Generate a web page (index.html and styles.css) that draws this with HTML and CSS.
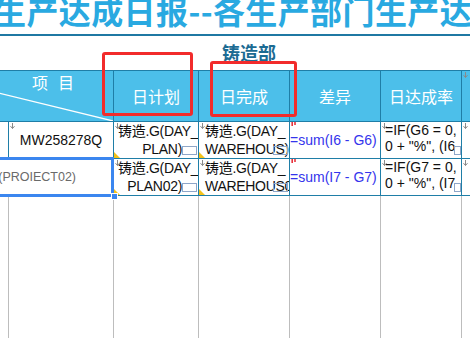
FILE: index.html
```html
<!DOCTYPE html>
<html lang="zh-CN">
<head>
    <meta charset="UTF-8">
    <title>生产达成日报</title>
    <link rel="stylesheet" href="styles.css">
</head>
<body>
    <div class="title-bar">
        <div class="title">生产达成日报--各生产部门生产达成日报</div>
    </div>
    <div class="dept">铸造部</div>

    <table class="sheet">
        <colgroup>
            <col class="col-a"><col class="col-b"><col class="col-c"><col class="col-d"><col class="col-e"><col class="col-f"><col class="col-g">
        </colgroup>
        <tr class="head">
            <th colspan="2" class="item-head">
                <svg class="diag" viewBox="0 0 165 51" preserveAspectRatio="none"><line x1="0" y1="10" x2="165" y2="51" stroke="#fff" stroke-width="1.3"/></svg>
                <span>项目</span>
            </th>
            <th>日计划</th>
            <th>日完成</th>
            <th>差异</th>
            <th>日达成率</th>
            <th class="blank"><svg class="tick" width="5" height="6" viewBox="0 0 5 6"><path d="M2.5 0V5.5M0.5 3.2L2.5 5.5L4.5 3.2" stroke="#8a8a8a" fill="none"/></svg></th>
        </tr>
        <tr class="row">
            <td class="cell-a"></td>
            <td class="cell-b code">
                <svg class="tick" width="5" height="6" viewBox="0 0 5 6"><path d="M2.5 0V5.5M0.5 3.2L2.5 5.5L4.5 3.2" stroke="#8a8a8a" fill="none"/></svg>
                MW258278Q
            </td>
            <td class="fx plan">
                <svg class="tick" width="5" height="6" viewBox="0 0 5 6"><path d="M2.5 0V5.5M0.5 3.2L2.5 5.5L4.5 3.2" stroke="#8a8a8a" fill="none"/></svg>
                <div class="line">铸造.G(DAY_</div>
                <div class="line end">PLAN)</div>
                <span class="note"></span><span class="more"></span>
            </td>
            <td class="fx done">
                <svg class="tick" width="5" height="6" viewBox="0 0 5 6"><path d="M2.5 0V5.5M0.5 3.2L2.5 5.5L4.5 3.2" stroke="#8a8a8a" fill="none"/></svg>
                <div class="line">铸造.G(DAY_</div>
                <div class="line">WAREHOUS)</div>
                <span class="note"></span><span class="more"></span>
            </td>
            <td class="diff">
                <svg class="flag" width="6" height="5" viewBox="0 0 6 5"><path d="M1.2 0V4M4 0V3" stroke="#e8323c" stroke-width="1.6"/></svg>
                =sum(I6 - G6)
            </td>
            <td class="rate">
                <svg class="tick" width="5" height="6" viewBox="0 0 5 6"><path d="M2.5 0V5.5M0.5 3.2L2.5 5.5L4.5 3.2" stroke="#8a8a8a" fill="none"/></svg>
                <div class="line">=IF(G6 = 0,</div>
                <div class="line">0 + "%", (I6</div>
                <span class="more"></span>
            </td>
            <td class="blank"><svg class="tick" width="5" height="6" viewBox="0 0 5 6"><path d="M2.5 0V5.5M0.5 3.2L2.5 5.5L4.5 3.2" stroke="#8a8a8a" fill="none"/></svg></td>
        </tr>
        <tr class="row">
            <td colspan="2" class="selected">
                <span class="ref">(PROIECT02)</span>
                <span class="handle"></span>
            </td>
            <td class="fx plan">
                <svg class="tick" width="5" height="6" viewBox="0 0 5 6"><path d="M2.5 0V5.5M0.5 3.2L2.5 5.5L4.5 3.2" stroke="#8a8a8a" fill="none"/></svg>
                <div class="line">铸造.G(DAY_</div>
                <div class="line end">PLAN02)</div>
                <span class="note"></span><span class="more"></span>
            </td>
            <td class="fx done">
                <svg class="tick" width="5" height="6" viewBox="0 0 5 6"><path d="M2.5 0V5.5M0.5 3.2L2.5 5.5L4.5 3.2" stroke="#8a8a8a" fill="none"/></svg>
                <div class="line">铸造.G(DAY_</div>
                <div class="line">WAREHOUS0</div>
                <span class="note"></span><span class="more"></span>
            </td>
            <td class="diff">
                <svg class="flag" width="6" height="5" viewBox="0 0 6 5"><path d="M1.2 0V4M4 0V3" stroke="#e8323c" stroke-width="1.6"/></svg>
                =sum(I7 - G7)
            </td>
            <td class="rate">
                <svg class="tick" width="5" height="6" viewBox="0 0 5 6"><path d="M2.5 0V5.5M0.5 3.2L2.5 5.5L4.5 3.2" stroke="#8a8a8a" fill="none"/></svg>
                <div class="line">=IF(G7 = 0,</div>
                <div class="line">0 + "%", (I7</div>
                <span class="more"></span>
            </td>
            <td class="blank"><svg class="tick" width="5" height="6" viewBox="0 0 5 6"><path d="M2.5 0V5.5M0.5 3.2L2.5 5.5L4.5 3.2" stroke="#8a8a8a" fill="none"/></svg></td>
        </tr>
        <tr class="filler">
            <td></td><td></td><td></td><td></td><td></td><td></td><td></td>
        </tr>
    </table>

    <!-- annotation boxes drawn over the header -->
    <div class="mark mark-plan"></div>
    <div class="mark mark-done"></div>
</body>
</html>
```

FILE: styles.css
```css
body {
    margin: 0;
    width: 470px;
    height: 339px;
    overflow: hidden;
    position: relative;
    background: #fff;
    color: #111;
    font-family: "Liberation Sans", "Noto Sans CJK SC", sans-serif;
}
.title-bar {
    height: 34px;
    border-bottom: 2px solid #1f78a3;
    overflow: hidden;
}
.title {
    margin: -6px 0 0 -6px;
    font-family: "Noto Sans CJK SC", sans-serif;
    font-size: 32px;
    font-weight: bold;
    line-height: 32px;
    letter-spacing: 0.4px;
    color: #29a9e1;
    white-space: nowrap;
}
.dept {
    height: 34px;
    padding-left: 222px;
    font-family: "Noto Sans CJK SC", sans-serif;
    font-size: 18px;
    font-weight: bold;
    line-height: 32px;
    color: #1c6b93;
}

/* sheet grid */
.sheet {
    width: 573px;
    margin-left: -52px;
    border-collapse: collapse;
    table-layout: fixed;
}
.col-a { width: 60px; }
.col-b { width: 105px; }
.col-c { width: 85px; }
.col-d { width: 91px; }
.col-e { width: 91px; }
.col-f { width: 81px; }
.col-g { width: 60px; }
.sheet th,
.sheet td {
    position: relative;
    padding: 0;
    border: 1px solid #1f7ea7;
    font-size: 14px;
    font-weight: normal;
}
.head th {
    height: 50px;
    background: #4cbfea;
    color: #fff;
    font-family: "Noto Sans CJK SC", sans-serif;
    font-size: 16px;
}
.item-head {
    text-align: left;
    vertical-align: top;
}
.item-head span {
    position: relative;
    display: block;
    padding-left: 83px;
    letter-spacing: 10px;
    line-height: 22px;
}
.diag {
    position: absolute;
    left: 0;
    top: 0;
    width: 100%;
    height: 100%;
}
.row td {
    height: 36px;
    background: #fff;
}
.cell-a {
    border-color: #bdbdbd;
}
.cell-b {
    border-left-color: #bdbdbd;
}
.code {
    text-align: center;
    padding-left: 6px;
}
.fx {
    vertical-align: top;
    font-size: 13.5px;
    letter-spacing: -0.3px;
    white-space: nowrap;
    overflow: hidden;
}
.fx .line {
    line-height: 18px;
}
.plan .line { padding-left: 4px; }
.plan .line.end {
    text-align: right;
    padding-right: 16px;
}
.done .line { padding-left: 6px; }
.diff {
    padding-left: 3px;
    color: #3434ec;
    white-space: nowrap;
}
.rate {
    vertical-align: top;
    padding-top: 4px;
    white-space: nowrap;
    overflow: hidden;
}
.rate .line {
    padding-left: 4px;
    line-height: 16px;
}
.selected {
    background: #edf5fd;
}
.selected::after {
    content: "";
    position: absolute;
    left: -2px;
    right: -1px;
    top: -2px;
    bottom: -2px;
    border: 3px solid #3b86ef;
}
.ref {
    display: block;
    padding-right: 37px;
    text-align: right;
    font-size: 12.5px;
    color: #6a6a6a;
}
.handle {
    position: absolute;
    right: -5px;
    bottom: -5px;
    z-index: 2;
    width: 5px;
    height: 5px;
    background: #3b86ef;
    border: 1px solid #fff;
}
.filler td {
    height: 142px;
    border-color: #bdbdbd;
    border-top: none;
    border-bottom: none;
}

/* cell markers */
.tick {
    position: absolute;
    left: 1px;
    top: 1px;
}
.flag {
    position: absolute;
    left: 1px;
    top: 0;
}
.note {
    position: absolute;
    left: 0;
    bottom: 0;
    width: 0;
    height: 0;
    border-bottom: 6px solid #f4c21a;
    border-right: 6px solid transparent;
}
.more {
    position: absolute;
    right: 1px;
    bottom: 3px;
    width: 13px;
    height: 7px;
    border: 1px solid #8ea6c8;
}
.rate .more {
    width: 5px;
    right: 0;
}

/* red annotation boxes */
.mark {
    position: absolute;
    border: 3px solid #f22b2b;
    border-radius: 3px;
}
.mark-plan {
    left: 102px;
    top: 52px;
    width: 85px;
    height: 58px;
}
.mark-done {
    left: 210px;
    top: 61px;
    width: 81px;
    height: 50px;
}
```
